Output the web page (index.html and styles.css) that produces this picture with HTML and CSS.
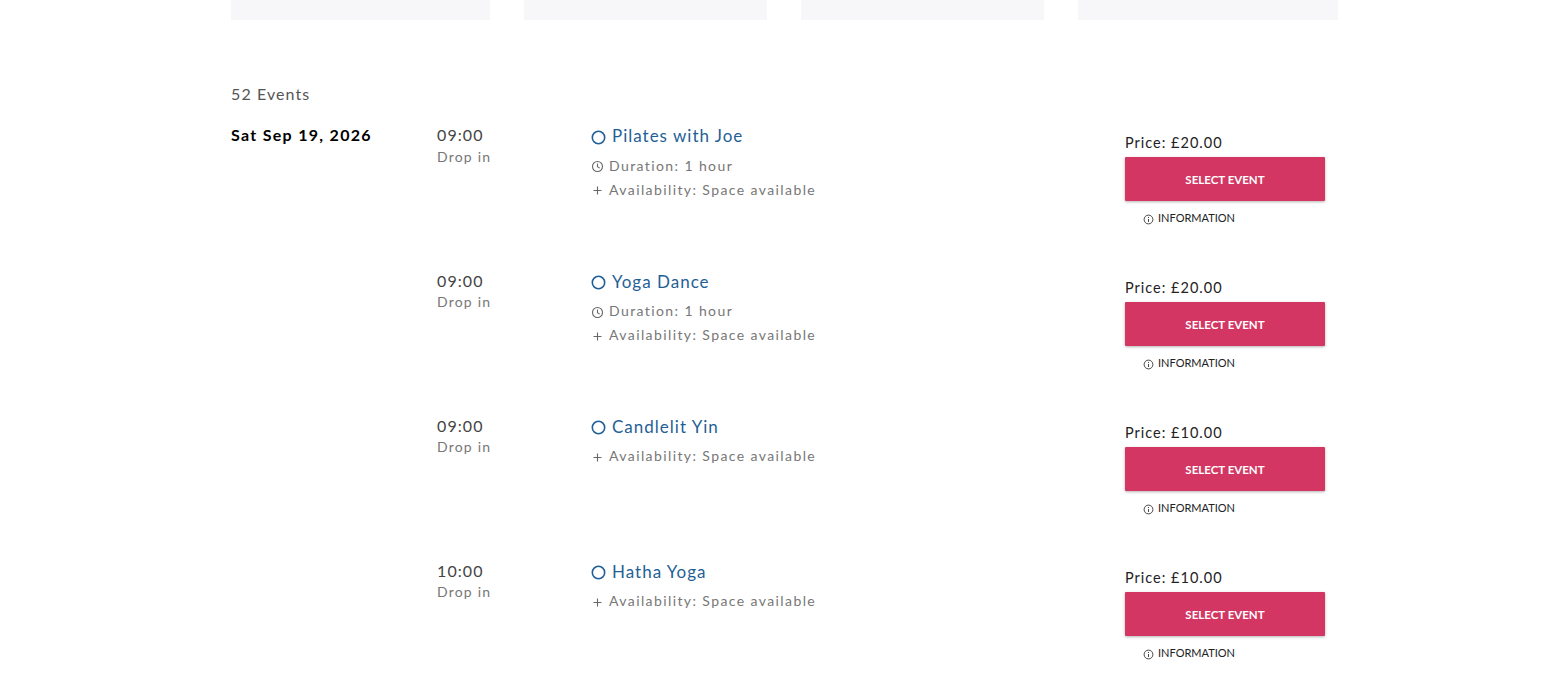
FILE: index.html
```html
<!DOCTYPE html>
<html lang="en">

<head>
    <meta charset="UTF-8">
    <title>Events</title>
    <link rel="stylesheet" href="styles.css">
</head>

<body>
    <div class="filters">
        <div class="filter wide"></div>
        <div class="filter"></div>
        <div class="filter"></div>
        <div class="filter wide"></div>
    </div>

    <p class="count">52 Events</p>

    <div class="schedule">
        <div class="day">Sat Sep 19, 2026</div>
        <div class="events">
            <div class="event">
                <div class="time"><div class="clock">09:00</div><div class="kind">Drop in</div></div>
                <div class="details">
                    <div class="title"><svg width="15" height="15" viewBox="0 0 15 15"><circle cx="7.5" cy="7.5" r="6.2" fill="none" stroke="#1f5f96" stroke-width="1.6"/></svg>Pilates with Joe</div>
                    <div class="meta"><svg width="13" height="13" viewBox="0 0 13 13"><circle cx="6.5" cy="6.5" r="5" fill="none" stroke="#666" stroke-width="1.1"/><path d="M6.5 3.5v3.2l2.2 1.4" fill="none" stroke="#666" stroke-width="1.1"/></svg>Duration: 1 hour</div>
                    <div class="meta"><svg width="13" height="13" viewBox="0 0 13 13"><path d="M6.5 2.5v8M2.5 6.5h8" fill="none" stroke="#666" stroke-width="1.1"/></svg>Availability: Space available</div>
                </div>
                <div class="buy">
                    <div class="price">Price: £20.00</div>
                    <button class="select">SELECT EVENT</button>
                    <div class="info"><svg width="11" height="11" viewBox="0 0 11 11"><circle cx="5.5" cy="5.5" r="4.4" fill="none" stroke="#333" stroke-width="0.9"/><path d="M5.5 5v3M5.5 3v1" stroke="#333" stroke-width="0.9"/></svg>INFORMATION</div>
                </div>
            </div>

            <div class="event">
                <div class="time"><div class="clock">09:00</div><div class="kind">Drop in</div></div>
                <div class="details">
                    <div class="title"><svg width="15" height="15" viewBox="0 0 15 15"><circle cx="7.5" cy="7.5" r="6.2" fill="none" stroke="#1f5f96" stroke-width="1.6"/></svg>Yoga Dance</div>
                    <div class="meta"><svg width="13" height="13" viewBox="0 0 13 13"><circle cx="6.5" cy="6.5" r="5" fill="none" stroke="#666" stroke-width="1.1"/><path d="M6.5 3.5v3.2l2.2 1.4" fill="none" stroke="#666" stroke-width="1.1"/></svg>Duration: 1 hour</div>
                    <div class="meta"><svg width="13" height="13" viewBox="0 0 13 13"><path d="M6.5 2.5v8M2.5 6.5h8" fill="none" stroke="#666" stroke-width="1.1"/></svg>Availability: Space available</div>
                </div>
                <div class="buy">
                    <div class="price">Price: £20.00</div>
                    <button class="select">SELECT EVENT</button>
                    <div class="info"><svg width="11" height="11" viewBox="0 0 11 11"><circle cx="5.5" cy="5.5" r="4.4" fill="none" stroke="#333" stroke-width="0.9"/><path d="M5.5 5v3M5.5 3v1" stroke="#333" stroke-width="0.9"/></svg>INFORMATION</div>
                </div>
            </div>

            <div class="event">
                <div class="time"><div class="clock">09:00</div><div class="kind">Drop in</div></div>
                <div class="details">
                    <div class="title"><svg width="15" height="15" viewBox="0 0 15 15"><circle cx="7.5" cy="7.5" r="6.2" fill="none" stroke="#1f5f96" stroke-width="1.6"/></svg>Candlelit Yin</div>
                    <div class="meta"><svg width="13" height="13" viewBox="0 0 13 13"><path d="M6.5 2.5v8M2.5 6.5h8" fill="none" stroke="#666" stroke-width="1.1"/></svg>Availability: Space available</div>
                </div>
                <div class="buy">
                    <div class="price">Price: £10.00</div>
                    <button class="select">SELECT EVENT</button>
                    <div class="info"><svg width="11" height="11" viewBox="0 0 11 11"><circle cx="5.5" cy="5.5" r="4.4" fill="none" stroke="#333" stroke-width="0.9"/><path d="M5.5 5v3M5.5 3v1" stroke="#333" stroke-width="0.9"/></svg>INFORMATION</div>
                </div>
            </div>

            <div class="event">
                <div class="time"><div class="clock">10:00</div><div class="kind">Drop in</div></div>
                <div class="details">
                    <div class="title"><svg width="15" height="15" viewBox="0 0 15 15"><circle cx="7.5" cy="7.5" r="6.2" fill="none" stroke="#1f5f96" stroke-width="1.6"/></svg>Hatha Yoga</div>
                    <div class="meta"><svg width="13" height="13" viewBox="0 0 13 13"><path d="M6.5 2.5v8M2.5 6.5h8" fill="none" stroke="#666" stroke-width="1.1"/></svg>Availability: Space available</div>
                </div>
                <div class="buy">
                    <div class="price">Price: £10.00</div>
                    <button class="select">SELECT EVENT</button>
                    <div class="info"><svg width="11" height="11" viewBox="0 0 11 11"><circle cx="5.5" cy="5.5" r="4.4" fill="none" stroke="#333" stroke-width="0.9"/><path d="M5.5 5v3M5.5 3v1" stroke="#333" stroke-width="0.9"/></svg>INFORMATION</div>
                </div>
            </div>
        </div>
    </div>
</body>

</html>
```

FILE: styles.css
```css
body {
    background-color: #fff;
    color: #333;
    font-family: 'Lato', 'Open Sans', sans-serif;
    margin: 0;
    padding: 0 230px 0 231px;
    height: 680px;
    overflow: hidden;
}

.filters {
    display: flex;
    gap: 34px;
    height: 20px;
}

.filter {
    flex: 243px 0 0;
    background-color: #f7f7f9;
}

.filter.wide {
    flex: 259px 0 0;
}

.filter.wide:last-child {
    flex-grow: 1;
}

.count {
    margin: 64px 0 0;
    font-size: 16px;
    line-height: 19px;
    letter-spacing: 1.1px;
    color: #555;
}

.schedule {
    display: flex;
    margin-top: 22px;
}

.day {
    width: 206px;
    flex-shrink: 0;
    font-size: 16px;
    line-height: 20px;
    font-weight: 700;
    letter-spacing: 1.3px;
    color: #000;
}

.events {
    flex: 1;
}

.event {
    display: flex;
    height: 145.15px;
}

.time {
    width: 155px;
    flex-shrink: 0;
    margin-right: -1px;
    padding-top: 0.4px;
}

.clock {
    font-size: 16px;
    line-height: 20px;
    letter-spacing: 1.1px;
    color: #444;
}

.kind {
    font-size: 14px;
    line-height: 20px;
    margin-top: 1.6px;
    letter-spacing: 1.2px;
    color: #777;
}

.details {
    width: 534px;
    flex-shrink: 0;
    padding-top: 0.4px;
}

.title {
    display: flex;
    align-items: center;
    gap: 6px;
    font-size: 17px;
    line-height: 22px;
    letter-spacing: 1px;
    color: #1f5f96;
}

.title svg {
    margin-top: 2px;
}

.meta {
    display: flex;
    align-items: center;
    gap: 5px;
    font-size: 14px;
    line-height: 24px;
    letter-spacing: 1.4px;
    color: #777;
}

.meta svg {
    margin-top: 2px;
}

.title + .meta {
    margin-top: 6.6px;
}

.buy {
    width: 200px;
    flex-shrink: 0;
    padding-top: 8px;
}

.price {
    font-size: 14.5px;
    line-height: 20px;
    margin-bottom: 4px;
    letter-spacing: 1px;
    color: #222;
}

.select {
    display: block;
    width: 200px;
    height: 44px;
    border: none;
    border-radius: 1px;
    background-color: #d33662;
    color: #fff;
    font-family: inherit;
    font-size: 11.5px;
    font-weight: 700;
    box-shadow: 0 1px 3px rgba(0, 0, 0, 0.3);
}

.info {
    display: flex;
    align-items: center;
    gap: 4px;
    margin: 9px 0 0 18px;
    font-size: 11px;
    line-height: 16px;
    color: #222;
}

.info svg {
    margin-top: 3px;
}
```
